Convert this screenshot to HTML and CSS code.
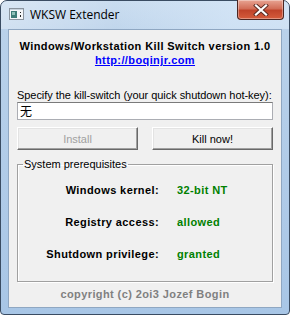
FILE: index.html
```html
<!DOCTYPE html>
<html lang="en">

<head>
    <meta charset="UTF-8">
    <meta name="viewport" content="width=device-width, initial-scale=1.0">
    <title>WKSW Extender</title>
    <link rel="stylesheet" href="styles.css">
</head>

<body>
    <div class="window">
        <div class="titlebar">
            <svg class="app-icon" width="15" height="12" viewBox="0 0 15 12">
                <rect x="0.5" y="0.5" width="14" height="11" fill="#f4f6f8" stroke="#8a949e"/>
                <rect x="2" y="3" width="6" height="7" fill="#3d7c76"/>
                <rect x="3" y="4" width="3" height="3" fill="#8fc1b8"/>
                <rect x="11" y="4" width="1" height="1" fill="#222"/>
                <rect x="11" y="7" width="1" height="2" fill="#222"/>
                <rect x="1" y="1" width="13" height="1" fill="#c8d3de"/>
            </svg>
            <span class="title">WKSW Extender</span>
            <div class="close-button">
                <svg width="16" height="12" viewBox="0 0 16 12">
                    <path d="M3 1.5 L13 10.5 M13 1.5 L3 10.5" stroke="#5a2a22" stroke-width="4" stroke-linecap="square"/>
                    <path d="M3 1.5 L13 10.5 M13 1.5 L3 10.5" stroke="#ffffff" stroke-width="2.2" stroke-linecap="square"/>
                </svg>
            </div>
        </div>

        <div class="client">
            <div class="heading">Windows/Workstation Kill Switch version 1.0</div>
            <div class="link-row"><a class="link" href="#">http://boqinjr.com</a></div>

            <div class="hotkey-label">Specify the kill-switch (your quick shutdown hot-key):</div>
            <div class="hotkey-input">无</div>

            <div class="buttons">
                <button class="button install-button" disabled>Install</button>
                <button class="button kill-button">Kill now!</button>
            </div>

            <fieldset class="group">
                <legend>System prerequisites</legend>
                <div class="row">
                    <span class="row-label">Windows kernel:</span>
                    <span class="row-value">32-bit NT</span>
                </div>
                <div class="row">
                    <span class="row-label">Registry access:</span>
                    <span class="row-value">allowed</span>
                </div>
                <div class="row">
                    <span class="row-label">Shutdown privilege:</span>
                    <span class="row-value">granted</span>
                </div>
            </fieldset>

            <div class="copyright">copyright (c) 2oi3 Jozef Bogin</div>
        </div>
    </div>
</body>

</html>
```

FILE: styles.css
```css
body {
    margin: 0;
    padding: 0;
    background-color: #ffffff;
    font-family: "Liberation Sans", Arial, sans-serif;
    font-size: 11px;
    color: #000;
}

.window {
    width: 290px;
    height: 315px;
    box-sizing: border-box;
    border: 1px solid #3a4c62;
    border-radius: 7px 7px 4px 4px;
    background: linear-gradient(to bottom, #c4d9ee 0px, #b9d1ea 30px, #a8c6e6 100%);
    padding: 0 7px 6px 7px;
    display: flex;
    flex-direction: column;
}

.titlebar {
    height: 28px;
    display: flex;
    align-items: flex-start;
    background: linear-gradient(to right, rgba(255,255,255,0.35), rgba(255,255,255,0.1) 40%, rgba(220,235,250,0.6) 80%);
    margin: 0 -7px;
    padding: 0 7px;
    border-radius: 6px 6px 0 0;
}

.app-icon {
    margin-top: 7px;
    margin-left: 1px;
}

.title {
    font-family: "Open Sans", "DejaVu Sans", sans-serif;
    font-size: 12px;
    margin-top: 5px;
    margin-left: 6px;
    color: #000;
}

.close-button {
    margin-left: auto;
    margin-right: -2px;
    margin-top: -1px;
    width: 45px;
    height: 19px;
    border: 1px solid #4b2622;
    border-top: none;
    border-radius: 0 0 4px 4px;
    background: linear-gradient(to bottom, #e8a493 0%, #d26e58 45%, #c0432a 55%, #d55c3c 100%);
    display: flex;
    justify-content: center;
    align-items: center;
    box-shadow: inset 0 0 0 1px rgba(255,255,255,0.35);
}

.client {
    flex: 1;
    background-color: #f0f0f0;
    border: 1px solid #8fa7c2;
    padding: 0 8px;
    display: flex;
    flex-direction: column;
}

.heading {
    font-weight: bold;
    letter-spacing: 0.4px;
    text-align: center;
    margin-top: 10px;
    line-height: 13px;
}

.link-row {
    text-align: center;
    margin-top: 1px;
    line-height: 13px;
}

.link {
    color: #0000ff;
    font-weight: bold;
    letter-spacing: 0.4px;
    text-decoration: underline;
}

.hotkey-label {
    margin-top: 22px;
    line-height: 13px;
    white-space: nowrap;
    letter-spacing: -0.05px;
}

.hotkey-input {
    margin-top: 0;
    height: 18px;
    box-sizing: border-box;
    border: 1px solid #abadb3;
    border-top-color: #7a7a7a;
    background-color: #fff;
    font-family: "Noto Sans CJK SC", sans-serif;
    font-size: 12px;
    line-height: 15px;
    padding-left: 2px;
}

.buttons {
    display: grid;
    grid-template-columns: 121px 121px;
    justify-content: space-between;
    margin-top: 7px;
}

.button {
    height: 23px;
    font-family: "Liberation Sans", Arial, sans-serif;
    font-size: 11px;
    background-color: #f0f0f0;
    border: 1px solid;
    border-color: #ffffff #696969 #696969 #ffffff;
    box-shadow: inset -1px -1px 0 #a0a0a0, inset 1px 1px 0 #e3e3e3;
    padding: 0;
    color: #000;
}

.install-button {
    color: #a0a0a0;
}

.group {
    margin: 8px 0 0 0;
    padding: 13px 0 0 0;
    height: 124px;
    box-sizing: border-box;
    border: 1px solid #a0a0a0;
    box-shadow: 1px 1px 0 #ffffff, inset 1px 1px 0 #ffffff;
    display: flex;
    flex-direction: column;
    gap: 19px;
}

.group legend {
    padding: 0 1px;
    margin-left: 5px;
    font-size: 11px;
    line-height: 13px;
}

.row {
    display: grid;
    grid-template-columns: 141px auto;
    column-gap: 18px;
    font-weight: bold;
    letter-spacing: 0.4px;
    line-height: 13px;
}

.row-label {
    text-align: right;
    color: #000;
}

.row-value {
    color: #008000;
}

.copyright {
    text-align: center;
    font-weight: bold;
    letter-spacing: 0.4px;
    color: #808080;
    margin-top: 6px;
    line-height: 13px;
}
```
